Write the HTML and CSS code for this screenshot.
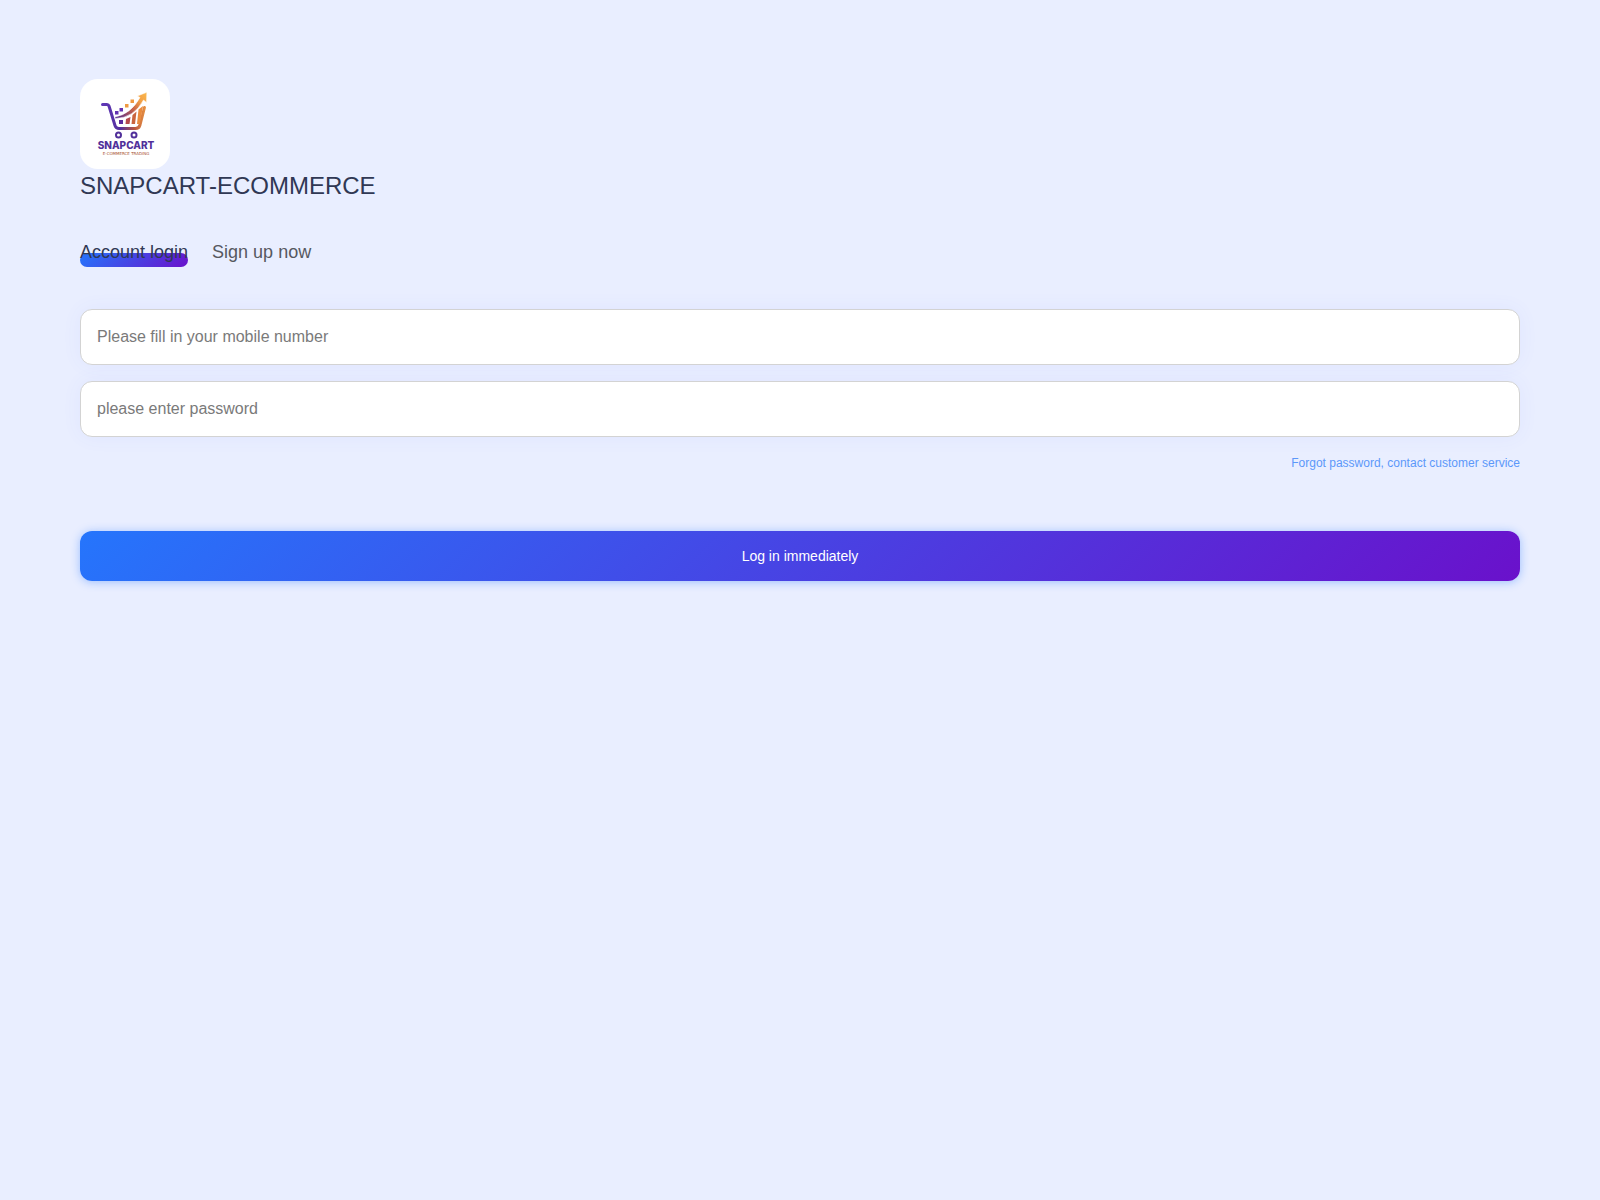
FILE: index.html
```html
<!DOCTYPE html>
<html lang="en">
<head>
    <meta charset="UTF-8">
    <meta name="viewport" content="width=device-width, initial-scale=1.0">
    <title>SNAPCART-ECOMMERCE</title>
    <link rel="stylesheet" href="styles.css">
</head>
<body>
    <main class="login-page">
        <!-- Brand -->
        <header class="brand">
            <svg class="logo" viewBox="0 0 90 90" role="img" aria-label="Snapcart logo">
                <defs>
                    <linearGradient id="cartGradient" gradientUnits="userSpaceOnUse" x1="22" y1="0" x2="68" y2="0">
                        <stop offset="0" stop-color="#6038b8"/>
                        <stop offset="0.4" stop-color="#54309c"/>
                        <stop offset="0.7" stop-color="#b8553f"/>
                        <stop offset="1" stop-color="#f2a044"/>
                    </linearGradient>
                    <linearGradient id="arrowGradient" gradientUnits="userSpaceOnUse" x1="35" y1="39" x2="67" y2="14">
                        <stop offset="0" stop-color="#4c2590"/>
                        <stop offset="0.5" stop-color="#c96548"/>
                        <stop offset="0.75" stop-color="#f3a045"/>
                        <stop offset="1" stop-color="#fab94e"/>
                    </linearGradient>
                </defs>
                <path d="M22.500 25.500H27Q28.500 25.500 29 27L35 46.500Q36 49.500 39 49.500H55.500Q59 49.500 60 46L64.500 28.500" fill="none" stroke="url(#cartGradient)" stroke-width="3" stroke-linecap="round" stroke-linejoin="round"/>
                <path d="M39 41H43V45H39Z" fill="#5b2a9d"/>
                <path d="M46 40L50.500 38L49.500 45H45.500Z" fill="#b64b4d"/>
                <path d="M52.500 36L56.500 32.500L55 45H51.500Z" fill="#ca653e"/>
                <path d="M58.500 30.500L63 27L60 45H57Z" fill="#e98b3e"/>
                <path d="M35 38Q51 35 60 18.500L57.500 17L66.800 13.300L66.500 23.500L63.500 21Q54 39 35 39.500Z" fill="url(#arrowGradient)" stroke="#fff" stroke-width="0.500"/>
                <g fill="#6332b0">
                    <path d="M35 32H38.500V35.500H35Z"/>
                    <path d="M39.500 29H43V32.500H39.500Z"/>
                </g>
                <g fill="#ef9a42">
                    <path d="M45 25H48.500V28.500H45Z"/>
                    <path d="M50.500 20.500H54V24H50.500Z"/>
                </g>
                <g fill="none" stroke="#51309a" stroke-width="2">
                    <circle cx="38.500" cy="56" r="2.500"/>
                    <circle cx="54" cy="56" r="2.500"/>
                </g>
                <text class="logo-name" x="46" y="70">SNAPCART</text>
                <text class="logo-tagline" x="46" y="76">E-COMMERCE TRADING</text>
            </svg>
            <h1>SNAPCART-ECOMMERCE</h1>
        </header>

        <!-- Tabs -->
        <nav class="tabs">
            <a href="#login" class="tab active" aria-current="page">Account login</a>
            <a href="#signup" class="tab">Sign up now</a>
        </nav>

        <!-- Login form -->
        <form id="login">
            <input type="tel" id="mobile" aria-label="Mobile number" placeholder="Please fill in your mobile number">
            <input type="password" id="password" aria-label="Password" placeholder="please enter password">
            <a href="#service" class="forgot">Forgot password, contact customer service</a>
            <button type="submit" class="btn">Log in immediately</button>
        </form>
    </main>
</body>
</html>
```
FILE: styles.css
```css
/* Base styles */
* {
    box-sizing: border-box;
}

body {
    margin: 0;
    min-height: 100vh;
    background-color: #e9eeff;
    font-family: "Liberation Sans", Arial, sans-serif;
}

.login-page {
    padding: 79px 80px;
}

/* Brand */
.logo {
    display: block;
    width: 90px;
    height: 90px;
    background-color: #fff;
    border-radius: 18px;
}

.logo-name {
    font-family: Inter, sans-serif;
    font-size: 10px;
    font-weight: 800;
    text-anchor: middle;
    fill: #51309a;
}

.logo-tagline {
    font-family: "DejaVu Sans", sans-serif;
    font-size: 4px;
    text-anchor: middle;
    fill: #a8502f;
}

h1 {
    margin: 0;
    font-size: 24px;
    font-weight: normal;
    line-height: 34px;
    color: #303854;
}

/* Tabs */
.tabs {
    display: flex;
    gap: 24px;
    margin-top: 36px;
}

.tab {
    position: relative;
    z-index: 0;
    font-size: 18px;
    line-height: 26px;
    color: #56585f;
    text-decoration: none;
}

.tab.active {
    color: #303854;
}

.tab.active::after {
    content: "";
    position: absolute;
    left: 0;
    bottom: -2px;
    z-index: -1;
    width: 100%;
    height: 14px;
    border-radius: 7px;
    background: linear-gradient(135deg, #2575fc, #6a11cb);
}

/* Form styles */
form {
    display: flex;
    flex-direction: column;
    gap: 16px;
    margin-top: 44px;
}

input {
    display: block;
    width: 100%;
    height: 56px;
    padding: 0 16px;
    border: 1px solid #d3d3d3;
    border-radius: 12px;
    background-color: #fff;
    font-family: inherit;
    font-size: 16px;
    box-shadow: 0 0 20px rgba(80, 100, 255, 0.06);
}

input::placeholder {
    color: #7a7a7a;
}

.forgot {
    align-self: flex-end;
    margin-bottom: 42px;
    font-size: 12px;
    line-height: 20px;
    color: #5c98fa;
    text-decoration: none;
}

.btn {
    height: 50px;
    border: none;
    border-radius: 12px;
    background: linear-gradient(135deg, #2575fc, #6a11cb);
    box-shadow: 0 1px 10px rgba(37, 117, 252, 0.4);
    color: #fff;
    font-family: inherit;
    font-size: 14px;
    cursor: pointer;
}
```
